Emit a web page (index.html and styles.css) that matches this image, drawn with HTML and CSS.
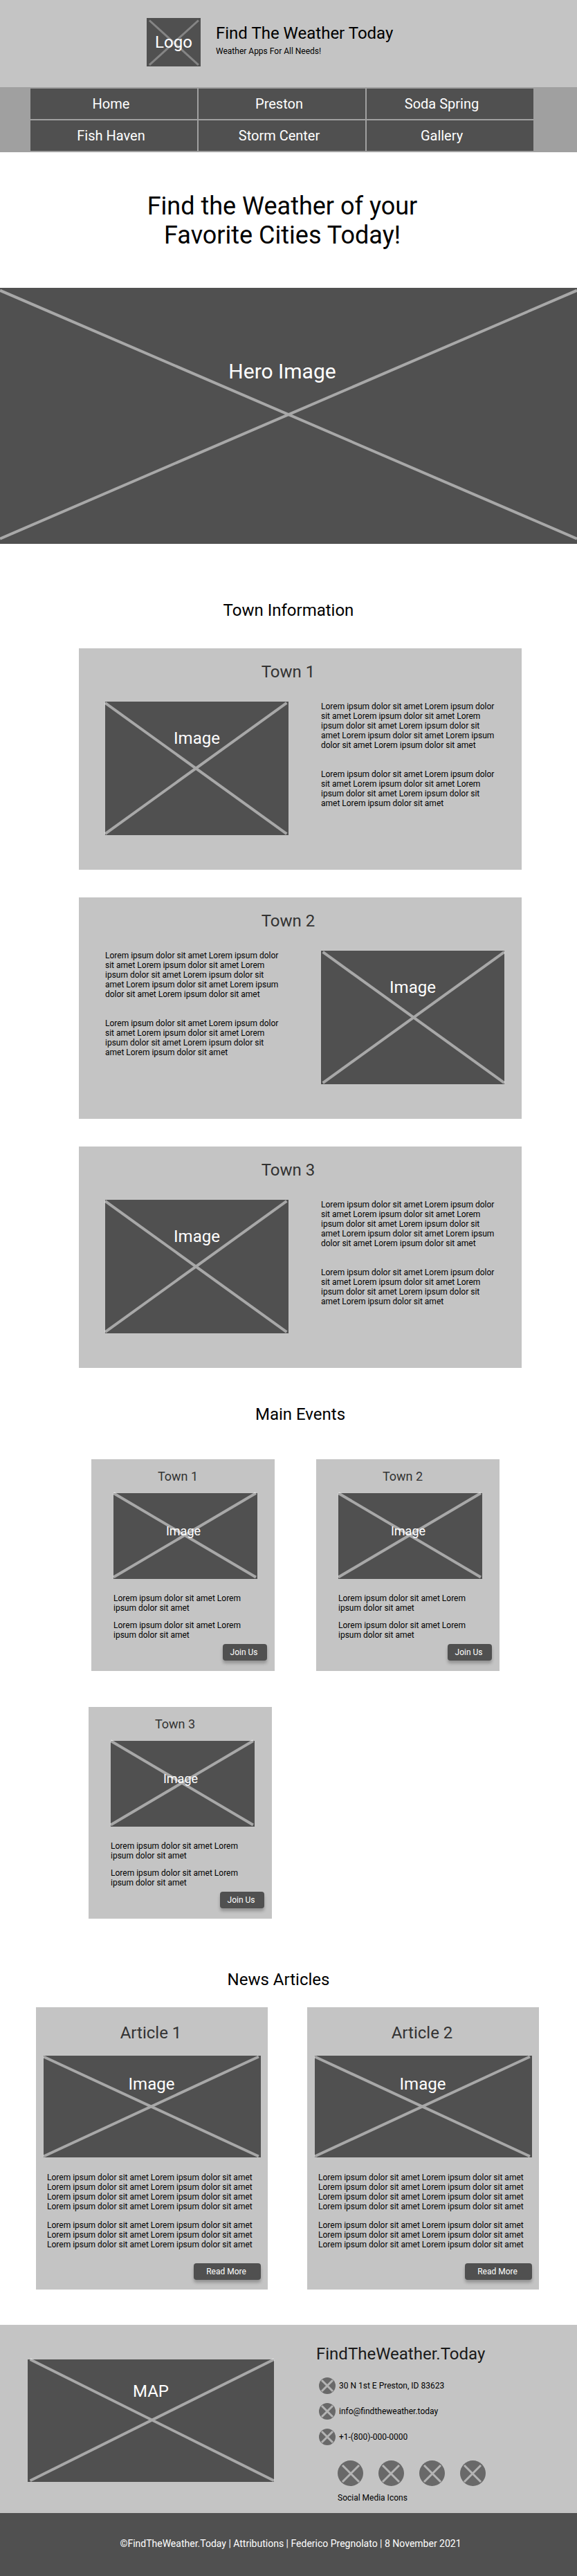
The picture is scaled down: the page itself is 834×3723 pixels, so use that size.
FILE: index.html
```html
<!DOCTYPE html>
<html lang="en">
<head>
  <meta charset="utf-8">
  <meta name="viewport" content="width=device-width, initial-scale=1">
  <title>Find The Weather Today</title>
  <link rel="stylesheet" href="styles.css">
</head>
<body>
  <header class="site-header">
    <div class="placeholder placeholder--logo">
      <svg class="cross" aria-hidden="true"><line x1="5%" y1="5%" x2="96%" y2="97%"/><line x1="96%" y1="5%" x2="5%" y2="97%"/></svg>
      <span class="placeholder-label">Logo</span>
    </div>
    <div class="brand">
      <p class="brand-name">Find The Weather Today</p>
      <p class="brand-tagline">Weather Apps For All Needs!</p>
    </div>
  </header>

  <nav class="site-nav" aria-label="Main">
    <a class="nav-link" href="#">Home</a>
    <a class="nav-link" href="#">Preston</a>
    <a class="nav-link" href="#">Soda Spring</a>
    <a class="nav-link" href="#">Fish Haven</a>
    <a class="nav-link" href="#">Storm Center</a>
    <a class="nav-link" href="#">Gallery</a>
  </nav>

  <main>
    <h1 class="headline">Find the Weather of your<br>Favorite Cities Today!</h1>

    <div class="placeholder placeholder--hero">
      <svg class="cross" aria-hidden="true"><line x1="0" y1="1%" x2="100%" y2="98%"/><line x1="100%" y1="1%" x2="0" y2="98%"/></svg>
      <span class="placeholder-label">Hero Image</span>
    </div>

    <section class="towns">
      <h2 class="section-title">Town Information</h2>
      <div class="town-list">
        <article class="town-card">
          <h3 class="town-title">Town 1</h3>
          <div class="town-body">
            <div class="placeholder placeholder--town">
              <svg class="cross" aria-hidden="true"><line x1="0" y1="1%" x2="99%" y2="99%"/><line x1="99%" y1="1%" x2="0" y2="99%"/></svg>
              <span class="placeholder-label">Image</span>
            </div>
            <div class="town-text">
              <p>Lorem ipsum dolor sit amet Lorem ipsum dolor sit amet Lorem ipsum dolor sit amet Lorem ipsum dolor sit amet Lorem ipsum dolor sit amet Lorem ipsum dolor sit amet Lorem ipsum dolor sit amet Lorem ipsum dolor sit amet</p>
              <p>Lorem ipsum dolor sit amet Lorem ipsum dolor sit amet Lorem ipsum dolor sit amet Lorem ipsum dolor sit amet Lorem ipsum dolor sit amet Lorem ipsum dolor sit amet</p>
            </div>
          </div>
        </article>

        <article class="town-card">
          <h3 class="town-title">Town 2</h3>
          <div class="town-body">
            <div class="town-text">
              <p>Lorem ipsum dolor sit amet Lorem ipsum dolor sit amet Lorem ipsum dolor sit amet Lorem ipsum dolor sit amet Lorem ipsum dolor sit amet Lorem ipsum dolor sit amet Lorem ipsum dolor sit amet Lorem ipsum dolor sit amet</p>
              <p>Lorem ipsum dolor sit amet Lorem ipsum dolor sit amet Lorem ipsum dolor sit amet Lorem ipsum dolor sit amet Lorem ipsum dolor sit amet Lorem ipsum dolor sit amet</p>
            </div>
            <div class="placeholder placeholder--town">
              <svg class="cross" aria-hidden="true"><line x1="1%" y1="1%" x2="100%" y2="99%"/><line x1="100%" y1="1%" x2="1%" y2="99%"/></svg>
              <span class="placeholder-label">Image</span>
            </div>
          </div>
        </article>

        <article class="town-card">
          <h3 class="town-title">Town 3</h3>
          <div class="town-body">
            <div class="placeholder placeholder--town">
              <svg class="cross" aria-hidden="true"><line x1="0" y1="1%" x2="99%" y2="99%"/><line x1="99%" y1="1%" x2="0" y2="99%"/></svg>
              <span class="placeholder-label">Image</span>
            </div>
            <div class="town-text">
              <p>Lorem ipsum dolor sit amet Lorem ipsum dolor sit amet Lorem ipsum dolor sit amet Lorem ipsum dolor sit amet Lorem ipsum dolor sit amet Lorem ipsum dolor sit amet Lorem ipsum dolor sit amet Lorem ipsum dolor sit amet</p>
              <p>Lorem ipsum dolor sit amet Lorem ipsum dolor sit amet Lorem ipsum dolor sit amet Lorem ipsum dolor sit amet Lorem ipsum dolor sit amet Lorem ipsum dolor sit amet</p>
            </div>
          </div>
        </article>
      </div>
    </section>

    <section class="events">
      <h2 class="section-title">Main Events</h2>
      <div class="event-row">
        <article class="event-card">
          <h3 class="event-title">Town 1</h3>
          <div class="placeholder placeholder--event">
            <svg class="cross" aria-hidden="true"><line x1="0" y1="0" x2="99%" y2="98%"/><line x1="99%" y1="0" x2="0" y2="98%"/></svg>
            <span class="placeholder-label">Image</span>
          </div>
          <div class="event-text">
            <p>Lorem ipsum dolor sit amet Lorem ipsum dolor sit amet</p>
            <p>Lorem ipsum dolor sit amet Lorem ipsum dolor sit amet</p>
          </div>
          <button class="button button--join" type="button">Join Us</button>
        </article>
        <article class="event-card">
          <h3 class="event-title">Town 2</h3>
          <div class="placeholder placeholder--event">
            <svg class="cross" aria-hidden="true"><line x1="0" y1="0" x2="99%" y2="98%"/><line x1="99%" y1="0" x2="0" y2="98%"/></svg>
            <span class="placeholder-label">Image</span>
          </div>
          <div class="event-text">
            <p>Lorem ipsum dolor sit amet Lorem ipsum dolor sit amet</p>
            <p>Lorem ipsum dolor sit amet Lorem ipsum dolor sit amet</p>
          </div>
          <button class="button button--join" type="button">Join Us</button>
        </article>
      </div>
      <div class="event-row event-row--last">
        <article class="event-card">
          <h3 class="event-title">Town 3</h3>
          <div class="placeholder placeholder--event">
            <svg class="cross" aria-hidden="true"><line x1="0" y1="0" x2="99%" y2="98%"/><line x1="99%" y1="0" x2="0" y2="98%"/></svg>
            <span class="placeholder-label">Image</span>
          </div>
          <div class="event-text">
            <p>Lorem ipsum dolor sit amet Lorem ipsum dolor sit amet</p>
            <p>Lorem ipsum dolor sit amet Lorem ipsum dolor sit amet</p>
          </div>
          <button class="button button--join" type="button">Join Us</button>
        </article>
      </div>
    </section>

    <section class="news">
      <h2 class="section-title news-title">News Articles</h2>
      <div class="news-list">
        <article class="news-card">
          <h3 class="article-title">Article 1</h3>
          <div class="placeholder placeholder--article">
            <svg class="cross" aria-hidden="true"><line x1="0" y1="1%" x2="99%" y2="99%"/><line x1="99%" y1="1%" x2="0" y2="99%"/></svg>
            <span class="placeholder-label">Image</span>
          </div>
          <div class="article-text">
            <p>Lorem ipsum dolor sit amet Lorem ipsum dolor sit amet Lorem ipsum dolor sit amet Lorem ipsum dolor sit amet Lorem ipsum dolor sit amet Lorem ipsum dolor sit amet Lorem ipsum dolor sit amet Lorem ipsum dolor sit amet</p>
            <p>Lorem ipsum dolor sit amet Lorem ipsum dolor sit amet Lorem ipsum dolor sit amet Lorem ipsum dolor sit amet Lorem ipsum dolor sit amet Lorem ipsum dolor sit amet</p>
          </div>
          <button class="button button--read" type="button">Read More</button>
        </article>
        <article class="news-card">
          <h3 class="article-title">Article 2</h3>
          <div class="placeholder placeholder--article">
            <svg class="cross" aria-hidden="true"><line x1="0" y1="1%" x2="99%" y2="99%"/><line x1="99%" y1="1%" x2="0" y2="99%"/></svg>
            <span class="placeholder-label">Image</span>
          </div>
          <div class="article-text">
            <p>Lorem ipsum dolor sit amet Lorem ipsum dolor sit amet Lorem ipsum dolor sit amet Lorem ipsum dolor sit amet Lorem ipsum dolor sit amet Lorem ipsum dolor sit amet Lorem ipsum dolor sit amet Lorem ipsum dolor sit amet</p>
            <p>Lorem ipsum dolor sit amet Lorem ipsum dolor sit amet Lorem ipsum dolor sit amet Lorem ipsum dolor sit amet Lorem ipsum dolor sit amet Lorem ipsum dolor sit amet</p>
          </div>
          <button class="button button--read" type="button">Read More</button>
        </article>
      </div>
    </section>
  </main>

  <footer>
    <div class="footer-main">
      <div class="placeholder placeholder--map">
        <svg class="cross" aria-hidden="true"><line x1="1%" y1="0" x2="100%" y2="99%"/><line x1="100%" y1="0" x2="1%" y2="99%"/></svg>
        <span class="placeholder-label">MAP</span>
      </div>
      <div class="footer-info">
        <h2 class="footer-title">FindTheWeather.Today</h2>
        <ul class="contact-list">
          <li class="contact">
            <svg class="contact-icon" viewBox="0 0 24 24" aria-hidden="true"><circle cx="12" cy="12" r="12"/><path d="M4 4 20 20M20 4 4 20"/></svg>
            <span>30 N 1st E Preston, ID 83623</span>
          </li>
          <li class="contact">
            <svg class="contact-icon" viewBox="0 0 24 24" aria-hidden="true"><circle cx="12" cy="12" r="12"/><path d="M4 4 20 20M20 4 4 20"/></svg>
            <a class="contact-link" href="mailto:info@findtheweather.today">info@findtheweather.today</a>
          </li>
          <li class="contact">
            <svg class="contact-icon" viewBox="0 0 24 24" aria-hidden="true"><circle cx="12" cy="12" r="12"/><path d="M4 4 20 20M20 4 4 20"/></svg>
            <a class="contact-link" href="tel:+18000000000">+1-(800)-000-0000</a>
          </li>
        </ul>
        <div class="social">
          <div class="social-icons">
            <svg class="social-icon" viewBox="0 0 37 37" aria-hidden="true"><circle cx="18.5" cy="18.5" r="18.5"/><path d="M7 7 31 31M31 7 7 31"/></svg>
            <svg class="social-icon" viewBox="0 0 37 37" aria-hidden="true"><circle cx="18.5" cy="18.5" r="18.5"/><path d="M6 7 30 31M30 7 6 31"/></svg>
            <svg class="social-icon" viewBox="0 0 37 37" aria-hidden="true"><circle cx="18.5" cy="18.5" r="18.5"/><path d="M7 7 31 31M31 7 7 31"/></svg>
            <svg class="social-icon" viewBox="0 0 37 37" aria-hidden="true"><circle cx="18.5" cy="18.5" r="18.5"/><path d="M6 7 30 31M30 7 6 31"/></svg>
          </div>
          <p class="social-caption">Social Media Icons</p>
        </div>
      </div>
    </div>
    <p class="footer-bar">©FindTheWeather.Today | Attributions | Federico Pregnolato | 8 November 2021</p>
  </footer>
</body>
</html>
```
FILE: styles.css
```css
* {
  box-sizing: border-box;
}

body {
  margin: 0;
  background: #fff;
  color: #000;
  font-family: Roboto, "Liberation Sans", sans-serif;
  font-size: 12px;
  line-height: 14px;
}

h1,
h2,
h3,
p,
ul {
  margin: 0;
  padding: 0;
  font-weight: 400;
}

/* Image placeholders */

.placeholder {
  position: relative;
  color: #fff;
  background: #505050;
  font-size: 24px;
  line-height: 28px;
  text-align: center;
}

.placeholder-label {
  position: relative;
}

.cross {
  position: absolute;
  inset: 0;
  width: 100%;
  height: 100%;
  overflow: visible;
  stroke: #fff;
  stroke-width: 4;
  opacity: 0.5;
}

.placeholder--logo {
  flex: none;
  width: 78px;
  height: 70px;
  padding-top: 21px;
}

.placeholder--logo .cross {
  stroke-width: 3;
  opacity: 0.3;
}

.placeholder--hero {
  height: 370px;
  padding: 103px 18px 0 0;
  font-size: 30px;
  line-height: 35px;
}

.placeholder--town {
  height: 193px;
  padding-top: 39px;
}

.placeholder--event {
  height: 124px;
  padding: 44px 6px 0 0;
  font-size: 18px;
  line-height: 21px;
}

.placeholder--article {
  height: 147px;
  padding: 27px 2px 0 0;
}

.placeholder--map {
  height: 177px;
  padding-top: 32px;
}

/* Header */

.site-header {
  display: flex;
  gap: 22px;
  min-height: 126px;
  padding: 26px 40px 30px 212px;
  background: #c4c4c4;
}

.brand {
  padding-top: 8px;
}

.brand-name {
  margin-bottom: 5px;
  font-size: 24px;
  line-height: 28px;
}

.site-nav {
  display: grid;
  grid-template-columns: repeat(3, 1fr);
  gap: 2px;
  padding: 2px 63px 2px 44px;
  background: #a0a0a0;
}

.nav-link {
  padding: 10px 8px 10px 0;
  color: #fff;
  background: #505050;
  font-size: 20px;
  line-height: 24px;
  text-align: center;
  text-decoration: none;
}

.nav-link:nth-child(3n) {
  padding-right: 24px;
}

.headline {
  padding: 57px 18px 55px 0;
  font-size: 36px;
  line-height: 42px;
  text-align: center;
}

.section-title {
  font-size: 24px;
  line-height: 28px;
  text-align: center;
}

/* Towns */

.towns {
  padding: 82px 0 53px;
}

.town-list {
  display: grid;
  gap: 40px;
  margin: 41px 80px 0 114px;
}

.town-card {
  padding: 20px 25px 50px 38px;
  background: #c4c4c4;
}

.town-title {
  margin-bottom: 29px;
  padding-right: 48px;
  color: #333;
  font-size: 24px;
  line-height: 28px;
  text-align: center;
}

.town-body {
  display: grid;
  grid-template-columns: 1fr 1fr;
  gap: 47px;
}

.town-text {
  display: grid;
  align-content: start;
  gap: 28px;
  padding-right: 12px;
}

/* Events */

.events {
  padding: 0 80px 74px 114px;
}

.event-row {
  display: grid;
  grid-template-columns: 1fr 1fr;
  gap: 60px;
  padding: 51px 32px 0 18px;
}

.event-row--last {
  padding: 52px 36px 0 14px;
}

.event-card {
  display: flex;
  flex-direction: column;
  padding: 14px 11px 15px 32px;
  background: #c4c4c4;
}

.event-card .placeholder,
.event-text {
  margin-right: 14px;
}

.event-title {
  margin-bottom: 14px;
  padding-right: 36px;
  color: #333;
  font-size: 18px;
  line-height: 21px;
  text-align: center;
}

.event-text {
  display: grid;
  gap: 11px;
  padding: 21px 16px 6px 0;
}

.button {
  align-self: flex-end;
  height: 24px;
  padding: 0 3px 0 0;
  border: 0;
  border-radius: 4px;
  box-shadow: 0 4px 4px rgba(0, 0, 0, 0.25);
  color: #fff;
  background: #505050;
  font: inherit;
}

.button--join {
  width: 64px;
}

.button--read {
  width: 97px;
}

/* News */

.news-title {
  padding-right: 29px;
}

.news-list {
  display: grid;
  grid-template-columns: 1fr 1fr;
  gap: 57px;
  padding: 26px 55px 51px 52px;
}

.news-card {
  display: flex;
  flex-direction: column;
  padding: 23px 10px 14px 11px;
  background: #c4c4c4;
}

.article-title {
  margin-bottom: 19px;
  padding-right: 4px;
  color: #333;
  font-size: 24px;
  line-height: 28px;
  text-align: center;
}

.article-text {
  display: grid;
  gap: 13px;
  padding: 22px 5px 20px;
}

/* Footer */

.footer-main {
  display: grid;
  grid-template-columns: 356fr 377fr;
  align-items: start;
  gap: 61px;
  padding: 28px 0 15px 40px;
  background: #c4c4c4;
}

.footer-main .placeholder {
  margin-top: 22px;
}

.footer-title {
  color: #1a1a1a;
  font-size: 24px;
  line-height: 28px;
}

.contact-list {
  display: grid;
  gap: 13px;
  padding: 20px 4px 22px;
  list-style: none;
}

.contact {
  display: flex;
  align-items: center;
  gap: 5px;
}

.contact-link {
  color: inherit;
  text-decoration: none;
}

.contact-icon,
.social-icon {
  display: block;
  fill: #696969;
  stroke: none;
}

.contact-icon path,
.social-icon path {
  stroke: #b4b4b4;
  stroke-width: 3;
}

.contact-icon {
  width: 24px;
  height: 24px;
}

.social {
  padding-left: 31px;
}

.social-icons {
  display: flex;
  gap: 22px;
  margin-bottom: 10px;
}

.social-icon {
  width: 37px;
  height: 37px;
}

.footer-bar {
  padding: 36px 0 39px 6px;
  color: #fff;
  background: #505050;
  font-size: 14px;
  line-height: 16px;
  text-align: center;
}
```
